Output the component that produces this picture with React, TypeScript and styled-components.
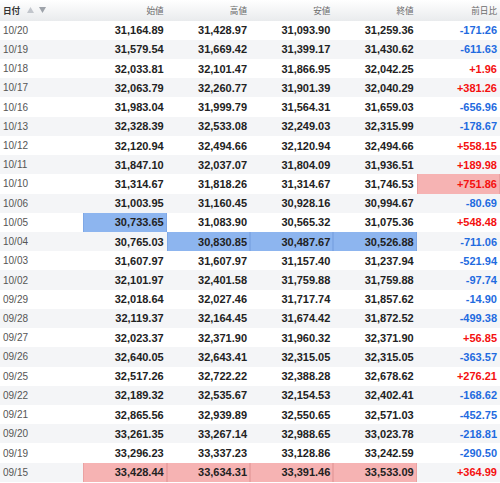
import React from "react";
import styled, { createGlobalStyle, css } from "styled-components";

const Global = createGlobalStyle`
  html, body { margin: 0; padding: 0; background: #fff; }
  body { font-family: "Liberation Sans", Arial, sans-serif; }
`;

type Hl = "" | "b" | "p";

interface Row {
  d: string;
  v: string[];
  h: Hl[];
}

const raw: [string, string, string, string, string, string, string?][] = [
  ["10/20", "31,164.89", "31,428.97", "31,093.90", "31,259.36", "-171.26"],
  ["10/19", "31,579.54", "31,669.42", "31,399.17", "31,430.62", "-611.63"],
  ["10/18", "32,033.81", "32,101.47", "31,866.95", "32,042.25", "+1.96"],
  ["10/17", "32,063.79", "32,260.77", "31,901.39", "32,040.29", "+381.26"],
  ["10/16", "31,983.04", "31,999.79", "31,564.31", "31,659.03", "-656.96"],
  ["10/13", "32,328.39", "32,533.08", "32,249.03", "32,315.99", "-178.67"],
  ["10/12", "32,120.94", "32,494.66", "32,120.94", "32,494.66", "+558.15"],
  ["10/11", "31,847.10", "32,037.07", "31,804.09", "31,936.51", "+189.98"],
  ["10/10", "31,314.67", "31,818.26", "31,314.67", "31,746.53", "+751.86", "....p"],
  ["10/06", "31,003.95", "31,160.45", "30,928.16", "30,994.67", "-80.69"],
  ["10/05", "30,733.65", "31,083.90", "30,565.32", "31,075.36", "+548.48", "b...."],
  ["10/04", "30,765.03", "30,830.85", "30,487.67", "30,526.88", "-711.06", ".bbb."],
  ["10/03", "31,607.97", "31,607.97", "31,157.40", "31,237.94", "-521.94"],
  ["10/02", "32,101.97", "32,401.58", "31,759.88", "31,759.88", "-97.74"],
  ["09/29", "32,018.64", "32,027.46", "31,717.74", "31,857.62", "-14.90"],
  ["09/28", "32,119.37", "32,164.45", "31,674.42", "31,872.52", "-499.38"],
  ["09/27", "32,023.37", "32,371.90", "31,960.32", "32,371.90", "+56.85"],
  ["09/26", "32,640.05", "32,643.41", "32,315.05", "32,315.05", "-363.57"],
  ["09/25", "32,517.26", "32,722.22", "32,388.28", "32,678.62", "+276.21"],
  ["09/22", "32,189.32", "32,535.67", "32,154.53", "32,402.41", "-168.62"],
  ["09/21", "32,865.56", "32,939.89", "32,550.65", "32,571.03", "-452.75"],
  ["09/20", "33,261.35", "33,267.14", "32,988.65", "33,023.78", "-218.81"],
  ["09/19", "33,296.23", "33,337.23", "33,128.86", "33,242.59", "-290.50"],
  ["09/15", "33,428.44", "33,634.31", "33,391.46", "33,533.09", "+364.99", "pppp."],
];

const rows: Row[] = raw.map((r) => {
  const mask = r[6] || ".....";
  return {
    d: r[0],
    v: [r[1], r[2], r[3], r[4], r[5]],
    h: mask.split("").map((c) => (c === "." ? "" : (c as Hl))),
  };
});

const Table = styled.div`
  width: 500px;
  display: flex;
  flex-direction: column;
`;

const HeaderRow = styled.div`
  display: grid;
  grid-template-columns: repeat(6, 1fr);
  height: 20.6px;
  background: linear-gradient(to bottom, #ffffff 0%, #f4f5f6 50%, #e9ebed 100%);
  align-items: center;
`;

const HeadCell = styled.div<{ $left?: boolean }>`
  font-family: "Noto Sans CJK JP", "Noto Sans CJK SC", sans-serif;
  font-size: 8.6px;
  color: #6b6b6b;
  text-align: ${(p) => (p.$left ? "left" : "right")};
  padding: 0 3px;
  display: flex;
  align-items: center;
  justify-content: ${(p) => (p.$left ? "flex-start" : "flex-end")};
  line-height: 1;
`;

const DateHead = styled.span`
  font-weight: bold;
  color: #333;
`;

const Arrows = styled.span`
  display: inline-flex;
  gap: 5px;
  margin-left: 7px;
  align-items: center;
`;

const BodyRow = styled.div<{ $alt: boolean }>`
  display: grid;
  grid-template-columns: repeat(6, 1fr);
  height: 19.22px;
  background: ${(p) => (p.$alt ? "#f4f5f7" : "#ffffff")};
`;

const DateCell = styled.div`
  font-size: 10px;
  color: #555;
  padding-left: 3px;
  display: flex;
  align-items: center;
`;

const NumCell = styled.div<{ $hl: Hl; $tone?: "up" | "down" | "" }>`
  font-size: 11px;
  font-weight: bold;
  color: ${(p) => (p.$tone === "up" ? "#f41010" : p.$tone === "down" ? "#1f6be0" : "#222")};
  display: flex;
  align-items: center;
  justify-content: flex-end;
  padding-right: 3px;
  ${(p) =>
    p.$hl === "b" &&
    css`
      background: #8db5ef;
      box-shadow: inset 1px 0 0 #7fa8e6, inset -1px 0 0 #7fa8e6;
    `}
  ${(p) =>
    p.$hl === "p" &&
    css`
      background: #f6b3b3;
      box-shadow: inset 1px 0 0 #eaa2a2, inset -1px 0 0 #eaa2a2;
    `}
`;

const Up = () => (
  <svg width="7" height="6" viewBox="0 0 7 6">
    <polygon points="3.5,0 7,6 0,6" fill="#c2c6cc" />
  </svg>
);
const Down = () => (
  <svg width="7" height="6" viewBox="0 0 7 6">
    <polygon points="0,0 7,0 3.5,6" fill="#9ea3aa" />
  </svg>
);

export default function App() {
  return (
    <>
      <Global />
      <Table>
        <HeaderRow>
          <HeadCell $left>
            <DateHead>日付</DateHead>
            <Arrows>
              <Up />
              <Down />
            </Arrows>
          </HeadCell>
          <HeadCell>始値</HeadCell>
          <HeadCell>高値</HeadCell>
          <HeadCell>安値</HeadCell>
          <HeadCell>終値</HeadCell>
          <HeadCell>前日比</HeadCell>
        </HeaderRow>
        {rows.map((r, i) => (
          <BodyRow key={r.d} $alt={i % 2 === 1}>
            <DateCell>{r.d}</DateCell>
            {r.v.map((val, j) => (
              <NumCell
                key={j}
                $hl={r.h[j]}
                $tone={j === 4 ? (val.startsWith("+") ? "up" : "down") : ""}
              >
                {val}
              </NumCell>
            ))}
          </BodyRow>
        ))}
      </Table>
    </>
  );
}
